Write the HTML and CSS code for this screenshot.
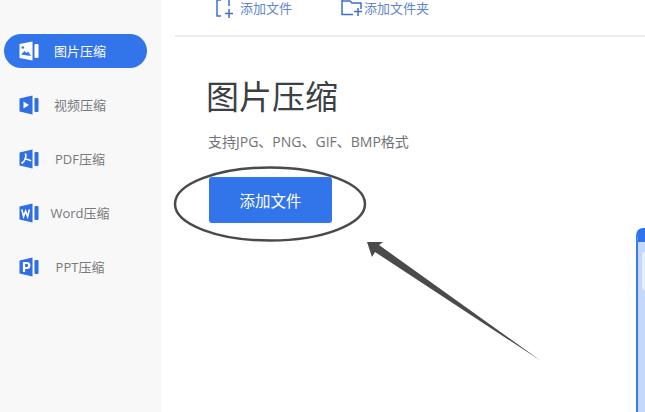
FILE: index.html
```html
<!DOCTYPE html>
<html lang="zh">
<head>
<meta charset="utf-8">
<title>图片压缩</title>
<link rel="stylesheet" href="styles.css">
</head>
<body>
<div class="app">
  <nav class="sidebar">
    <a class="nav-item active">
      <svg class="nav-icon" viewBox="0 0 20 20"><path class="fill" d="M.5 3 13.500.5v19l-13-2.500z"/><rect class="fill" x="15.500" y="3" width="4" height="14" rx="1"/><circle class="cut" cx="3.800" cy="6.500" r="1.300"/><path class="cut" d="M2 13.500 5.500 10l2 2 1.500-1.500 2.500 3.500v1z"/></svg>
      <span class="nav-label">图片压缩</span>
    </a>
    <a class="nav-item">
      <svg class="nav-icon" viewBox="0 0 20 20"><path class="fill" d="M.5 3.500 13.500.5v19l-13-3z"/><rect class="fill" x="15.500" y="3" width="4" height="14" rx="1"/><path class="cut" d="M4.500 6.500 10 10l-5.500 3.500z"/></svg>
      <span class="nav-label">视频压缩</span>
    </a>
    <a class="nav-item">
      <svg class="nav-icon" viewBox="0 0 20 20"><path class="fill" d="M.5 3.500 13.500.5v19l-13-3z"/><rect class="fill" x="15.500" y="3" width="4" height="14" rx="1"/><path class="stroke" d="M6.500 4.500C7.500 8 6 12 2.500 14.500M5 10.500c2.500-.5 5-.3 7 1.500"/></svg>
      <span class="nav-label">PDF压缩</span>
    </a>
    <a class="nav-item">
      <svg class="nav-icon" viewBox="0 0 20 20"><path class="fill" d="M.5 3.500 13.500.5v19l-13-3z"/><rect class="fill" x="15.500" y="3" width="4" height="14" rx="1"/><path class="stroke" d="m2.800 6.500 1.800 7 2-5.500 2 5.500 1.800-7"/></svg>
      <span class="nav-label">Word压缩</span>
    </a>
    <a class="nav-item">
      <svg class="nav-icon" viewBox="0 0 20 20"><path class="fill" d="M.5 3.500 13.500.5v19l-13-3z"/><rect class="fill" x="15.500" y="3" width="4" height="14" rx="1"/><path class="stroke bold" d="M5 15V6h2.800a2.500 2.500 0 0 1 0 5H5"/></svg>
      <span class="nav-label">PPT压缩</span>
    </a>
  </nav>
  <main class="main">
    <header class="toolbar">
      <a class="tool tool-file">
        <svg class="tool-icon" viewBox="0 0 20 20"><path d="M5 0H1v16h4M13 0v6M13 9v9M9 13.500h8"/></svg>
        <span>添加文件</span>
      </a>
      <a class="tool">
        <svg class="tool-icon wide" viewBox="0 0 22 20"><path d="M1 0v14.500h11M1 1h8l2 2h9v6M17 8v8M13 11.500h8"/></svg>
        <span>添加文件夹</span>
      </a>
    </header>
    <section class="content">
      <h1 class="title">图片压缩</h1>
      <p class="hint">支持JPG、PNG、GIF、BMP格式</p>
      <button class="add-btn">添加文件</button>
    </section>
  </main>
</div>
<svg class="annotation" viewBox="0 0 645 412" aria-hidden="true">
  <ellipse cx="270" cy="204" rx="95" ry="36.500" class="ring"/>
  <path class="arrow" d="M367 242 383 242 379 245 541 361 375 252 372 257z"/>
</svg>
<div class="peek"></div>
</body>
</html>
```
FILE: styles.css
```css
* { box-sizing: border-box; }
html, body { margin: 0; height: 100%; overflow: hidden; background: #fff; }
body { font-family: "Open Sans", "Noto Sans CJK SC", sans-serif; position: relative; }
.app { display: flex; width: 645px; height: 412px; }
.sidebar { width: 161px; background: #f8f8f9; padding: 34px 14px 0 4px; display: flex; flex-direction: column; gap: 20px; flex: none; }
.nav-item { height: 34px; border-radius: 17px; display: flex; align-items: center; padding-left: 15px; color: #77787a; font-size: 13px; line-height: 18px; }
.nav-item.active { background: #3274ea; color: #fff; }
.nav-icon { width: 20px; height: 20px; flex: none; }
.nav-icon .fill { fill: #2f6fe3; }
.nav-icon .cut { fill: #fff; }
.nav-icon .stroke { fill: none; stroke: #fff; stroke-width: 1.600; }
.nav-icon .bold { stroke-width: 2.200; }
.active .nav-icon .fill { fill: #fff; }
.active .nav-icon .cut { fill: #3274ea; }
.nav-label { width: 82px; text-align: center; white-space: nowrap; }
.main { flex: 1; min-width: 0; padding-left: 14px; }
.toolbar { height: 37px; border-bottom: 2px solid #ededee; display: flex; align-items: flex-start; padding-left: 41px; gap: 27px; color: #5f86cf; font-size: 13px; line-height: 16px; }
.tool { display: flex; align-items: flex-start; gap: 4px; white-space: nowrap; }
.tool-file { width: 98px; }
.tool-icon { width: 20px; height: 20px; fill: none; stroke: #3d70c8; stroke-width: 1.500; flex: none; }
.tool-icon.wide { width: 22px; margin-right: -3px; }
.content { padding-left: 32px; }
.title { margin: 39px 0 0 -1px; font-size: 33px; line-height: 42px; font-weight: 400; color: #3c3f44; }
.hint { margin: 15px 0 0 1px; font-size: 14px; line-height: 18px; color: #707276; white-space: nowrap; }
.add-btn { display: block; margin: 26px 0 0 2px; width: 123px; height: 46px; border: 0; border-radius: 3px; background: #3274ea; color: #fff; font: inherit; font-size: 15.500px; }
.annotation { position: absolute; left: 0; top: 0; width: 645px; height: 412px; pointer-events: none; }
.ring { fill: none; stroke: #4a4a4a; stroke-width: 2.500; }
.arrow { fill: #4a4a4a; }
.peek { position: absolute; left: 636px; top: 228px; width: 20px; height: 184px; background: #c3d8fb; border-left: 2px solid #3d7bea; border-top: 14px solid #2f73ef; border-top-left-radius: 7px; }
.peek::after { content: ""; position: absolute; left: 4px; top: 10px; width: 20px; height: 38px; background: #e6effd; border-radius: 3px; }
```
